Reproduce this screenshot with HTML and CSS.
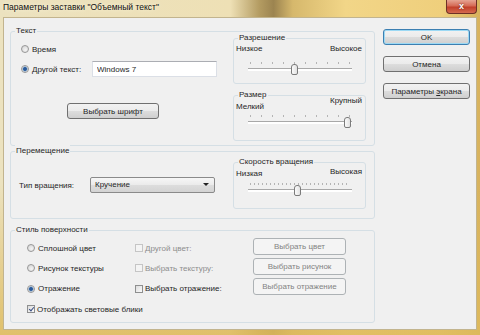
FILE: index.html
```html
<!DOCTYPE html>
<html lang="ru">
<head>
    <meta charset="UTF-8">
    <title>Параметры заставки "Объемный текст"</title>
    <link rel="stylesheet" href="styles.css">
</head>
<body>

<div class="window">
    <div class="titlebar">
        <span class="title">Параметры заставки "Объемный текст"</span>
        <span class="close">x</span>
    </div>

    <div class="client">
        <div class="main">

            <div class="group group-text">
                <span class="group-label">Текст</span>
                <div class="text-options">
                    <div class="option"><span class="radio"></span>Время</div>
                    <div class="option option-wide">
                        <span class="option-name"><span class="radio checked"></span>Другой текст:</span>
                        <input class="textbox" type="text" value="Windows 7">
                    </div>
                    <button class="btn font-btn">Выбрать шрифт</button>
                </div>
                <div class="scales">
                    <div class="subgroup sub-resolution">
                        <span class="group-label">Разрешение</span>
                        <div class="scale-labels"><span>Низкое</span><span>Высокое</span></div>
                        <div class="slider"><span class="thumb" style="left: 46px"></span></div>
                    </div>
                    <div class="subgroup sub-size">
                        <span class="group-label">Размер</span>
                        <div class="scale-labels"><span class="low">Мелкий</span><span class="high">Крупный</span></div>
                        <div class="slider"><span class="thumb" style="left: 99px"></span></div>
                    </div>
                </div>
            </div>

            <div class="group group-move">
                <span class="group-label">Перемещение</span>
                <div class="move-row">
                    <span class="option-name">Тип вращения:</span>
                    <div class="select">Кручение<span class="arrow"></span></div>
                </div>
                <div class="subgroup sub-speed">
                    <span class="group-label">Скорость вращения</span>
                    <div class="scale-labels"><span class="low">Низкая</span><span class="high">Высокая</span></div>
                    <div class="slider dense"><span class="thumb" style="left: 49px"></span></div>
                </div>
            </div>

            <div class="group group-surface">
                <span class="group-label">Стиль поверхности</span>
                <div class="surface-grid">
                    <div class="option"><span class="radio"></span>Сплошной цвет</div>
                    <div class="option disabled"><span class="check"></span>Другой цвет:</div>
                    <button class="btn" disabled>Выбрать цвет</button>

                    <div class="option"><span class="radio"></span>Рисунок текстуры</div>
                    <div class="option disabled"><span class="check"></span>Выбрать текстуру:</div>
                    <button class="btn" disabled>Выбрать рисунок</button>

                    <div class="option"><span class="radio checked"></span>Отражение</div>
                    <div class="option"><span class="check"></span>Выбрать отражение:</div>
                    <button class="btn" disabled>Выбрать отражение</button>

                    <div class="option highlights"><span class="check checked"></span>Отображать световые блики</div>
                </div>
            </div>

        </div>

        <div class="side">
            <button class="btn default">OK</button>
            <button class="btn">Отмена</button>
            <button class="btn">Параметры <u>э</u>крана</button>
        </div>
    </div>
</div>

</body>
</html>
```

FILE: styles.css
```css
* {
    box-sizing: border-box;
}
body {
    margin: 0;
    font-family: 'Liberation Sans', Arial, sans-serif;
    font-size: 8px;
    color: #262626;
}
.window {
    width: 480px;
    height: 335px;
    display: flex;
    flex-direction: column;
    background:
        linear-gradient(to bottom, rgba(230, 195, 100, 0) 55%, rgba(222, 186, 92, 0.85) 100%),
        linear-gradient(to right, #ece2bf 0%, #eee0b5 48%, #b49c62 54%, #9c8450 57%, #d6b86c 61%, #f2d688 72%, #efcf7c 92%, #d7b25d 100%);
}
.titlebar {
    height: 17px;
    display: flex;
    align-items: flex-start;
    justify-content: space-between;
    padding-left: 3px;
}
.title {
    line-height: 13px;
    margin-top: 1px;
    font-size: 8.5px;
    color: #111;
    text-shadow: 0 0 4px #fff8e0;
}
.close {
    width: 31px;
    height: 14px;
    margin-right: 3px;
    border: 1px solid #6d3026;
    border-top: none;
    border-radius: 0 0 4px 4px;
    background: linear-gradient(#e6a493 0%, #d56a55 45%, #c2402b 55%, #d46a4f 100%);
    color: #fff;
    font-weight: bold;
    font-size: 9px;
    line-height: 12px;
    text-align: center;
    text-shadow: 0 0 2px #5a1a10;
}
.client {
    flex: 1;
    margin: 0 3px 5px 3px;
    border: 1px solid #c2b48e;
    background: #f0f0f0;
    display: flex;
    padding: 11px 0 0 6px;
}
.main {
    width: 365px;
    margin-top: 2px;
}
.side {
    width: 87px;
    margin-left: 8px;
    display: flex;
    flex-direction: column;
}
.side .btn {
    height: 16px;
    margin-bottom: 11px;
}

/* group boxes */
.group, .subgroup {
    position: relative;
    border: 1px solid #d5dfe5;
    border-radius: 3px;
}
.group-label {
    position: absolute;
    top: -7px;
    left: 4px;
    padding: 0 1px;
    line-height: 12px;
    background: #f0f0f0;
    white-space: nowrap;
}
.group-text {
    height: 115px;
    display: flex;
}
.group-move {
    height: 68px;
    margin-top: 5px;
    display: flex;
}
.group-surface {
    height: 93px;
    margin-top: 11px;
}

/* text group */
.text-options {
    padding: 9px 0 0 10px;
    display: flex;
    flex-direction: column;
    align-items: flex-start;
}
.option {
    display: flex;
    align-items: center;
    height: 16px;
    white-space: nowrap;
}
.option-wide {
    margin-top: 4px;
}
.option-name {
    display: flex;
    align-items: center;
    width: 71px;
    white-space: nowrap;
}
.textbox {
    width: 125px;
    height: 16px;
    border: 1px solid #dbdfe6;
    border-top-color: #abadb3;
    background: #fff;
    padding: 0 4px;
    font: inherit;
    color: #262626;
}
.font-btn {
    width: 92px;
    height: 16px;
    margin: 26px 0 0 46px;
}

/* sliders */
.scales {
    margin: 6px 8px 0 auto;
    width: 133px;
}
.subgroup {
    height: 46px;
}
.sub-size {
    margin-top: 11px;
}
.sub-speed {
    width: 133px;
    height: 47px;
    margin: 10px 8px 0 auto;
}
.scale-labels {
    display: flex;
    justify-content: space-between;
    padding: 0 3px 0 2px;
    line-height: 12px;
}
.sub-resolution .scale-labels {
    margin-top: 4px;
}
.sub-resolution .slider {
    margin-top: 7px;
}
.sub-size .scale-labels {
    height: 18px;
    margin-top: -1px;
}
.sub-size .slider {
    margin-top: 2px;
}
.sub-speed .scale-labels {
    height: 14px;
    margin-top: 3px;
}
.sub-speed .slider {
    margin-top: 3px;
}
.low {
    align-self: flex-end;
}
.high {
    align-self: flex-start;
}
.slider {
    position: relative;
    width: 104px;
    height: 14px;
    margin: 0 auto;
}
.slider::before {
    content: "";
    position: absolute;
    left: 2px;
    top: 0;
    width: 100px;
    height: 2px;
    background: repeating-linear-gradient(to right, #b4b4b4 0 1px, transparent 1px 11px);
}
.slider.dense::before {
    background: repeating-linear-gradient(to right, #b4b4b4 0 1px, transparent 1px 4px);
}
.slider::after {
    content: "";
    position: absolute;
    left: 0;
    top: 6px;
    width: 104px;
    height: 2px;
    border-top: 1px solid #a8a8a8;
    background: #fff;
}
.thumb {
    position: absolute;
    top: 2px;
    width: 7px;
    height: 11px;
    margin-left: -3px;
    border: 1px solid #7b7b7b;
    border-radius: 3px 3px 2px 2px;
    background: linear-gradient(to right, #fbfbfb, #e2e2e2);
    z-index: 1;
}

/* move group */
.move-row {
    display: flex;
    align-items: center;
    align-self: flex-start;
    margin: 25px 0 0 8px;
}
.select {
    position: relative;
    width: 125px;
    height: 16px;
    border: 1px solid #8a8a8a;
    border-radius: 2px;
    background: linear-gradient(#f6f6f6 0%, #ebebeb 50%, #dddddd 51%, #d3d3d3 100%);
    padding-left: 4px;
    line-height: 14px;
}
.arrow {
    position: absolute;
    right: 5px;
    top: 5px;
    border-left: 3px solid transparent;
    border-right: 3px solid transparent;
    border-top: 3px solid #222;
}

/* surface group */
.surface-grid {
    display: grid;
    grid-template-columns: 108px 118px 93px;
    grid-template-rows: 20px 20px 21px 20px;
    align-items: center;
    padding: 7px 0 0 16px;
}
.surface-grid .btn {
    align-self: start;
    height: 17px;
}
.highlights {
    grid-column: 1 / 4;
}
.disabled {
    color: #8d8d8d;
}

/* controls */
.radio {
    width: 8px;
    height: 8px;
    margin-right: 3px;
    border: 1px solid #979797;
    border-radius: 50%;
    background: radial-gradient(circle at 60% 65%, #f4f4f4, #d2d2d2);
    flex: none;
}
.radio.checked {
    background: radial-gradient(circle, #2a5a9a 0 1.5px, #7aa0c8 2px, #e6e6e6 3px);
}
.check {
    width: 8px;
    height: 8px;
    margin-right: 2px;
    border: 1px solid #8e8f8f;
    background: linear-gradient(135deg, #dcdcdc, #fbfbfb);
    position: relative;
    flex: none;
}
.disabled .check {
    border-color: #c5c5c5;
    background: #f4f4f4;
}
.check.checked::after {
    content: "";
    position: absolute;
    left: 2px;
    top: 0;
    width: 2px;
    height: 4px;
    border-right: 1px solid #3a4f84;
    border-bottom: 1px solid #3a4f84;
    transform: rotate(40deg);
}
.btn {
    font: inherit;
    color: #262626;
    padding: 0;
    border: 1px solid #707070;
    border-radius: 3px;
    background: linear-gradient(#f2f2f2 0%, #ebebeb 50%, #dddddd 51%, #cfcfcf 100%);
    cursor: pointer;
}
.btn.default {
    border-color: #3c7fb1;
    box-shadow: inset 0 0 0 1px #9cd9f4;
}
.btn:disabled {
    border-color: #adb2b5;
    background: #f4f4f4;
    color: #838383;
}
```
